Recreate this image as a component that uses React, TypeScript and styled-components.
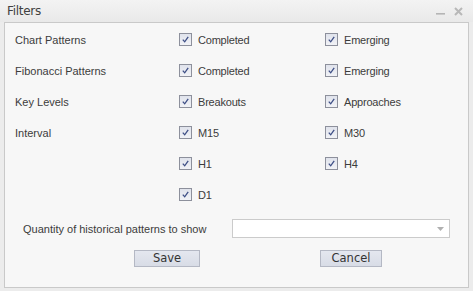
import React from "react";
import styled, { createGlobalStyle } from "styled-components";

const Global = createGlobalStyle`
  html, body { margin: 0; padding: 0; background: #ececec; }
  #root { width: 473px; height: 291px; }
`;

const Window = styled.div`
  width: 473px;
  height: 291px;
  box-sizing: border-box;
  background: #ececec;
  display: flex;
  flex-direction: column;
  font-family: "Liberation Sans", Tahoma, sans-serif;
  color: #3a3a3a;
`;

const TitleBar = styled.div`
  height: 22px;
  flex: none;
  display: flex;
  align-items: center;
  justify-content: space-between;
  padding: 0 10px 0 7px;
  box-sizing: border-box;
  background: linear-gradient(#f3f3f3, #e9e9e9);
`;

const Title = styled.span`
  color: #404040;
  font-family: "DejaVu Sans", sans-serif;
  letter-spacing: -0.3px;
  font-size: 12px;
`;

const TitleIcons = styled.div`
  display: flex;
  align-items: center;
  gap: 8px;
`;

const Content = styled.div`
  flex: 1;
  margin: 0 4px 3px 4px;
  border: 1px solid #c9c9c9;
  background: #f7f7f7;
  display: flex;
  flex-direction: column;
  padding: 1px 0 0 0;
`;

const Grid = styled.div`
  display: grid;
  grid-template-columns: 164px 146px 1fr;
  grid-auto-rows: 31px;
  padding-left: 10px;
  align-items: center;
`;

const Label = styled.div`
  font-size: 11px;
  color: #3c3c3c;
`;

const Check = styled.label`
  display: flex;
  align-items: center;
  gap: 6px;
  font-size: 11px;
  letter-spacing: -0.2px;
  color: #3c3c3c;
`;

const Box = styled.span`
  width: 11px;
  height: 11px;
  border: 1px solid #8d909c;
  background: linear-gradient(#e0e3ec, #f1f2f6);
  display: flex;
  align-items: center;
  justify-content: center;
  flex: none;
`;

const QtyRow = styled.div`
  display: flex;
  align-items: center;
  margin-top: 9px;
  padding-left: 18px;
`;

const QtyLabel = styled.div`
  font-size: 11px;
  color: #3c3c3c;
  width: 209px;
`;

const Select = styled.div`
  width: 218px;
  height: 19px;
  box-sizing: border-box;
  border: 1px solid #cbcbcb;
  background: #ffffff;
  display: flex;
  align-items: center;
  justify-content: flex-end;
  padding-right: 5px;
`;

const Buttons = styled.div`
  display: flex;
  padding-left: 129px;
  gap: 120px;
  margin-top: 12px;
`;

const Button = styled.button<{ $w: number }>`
  width: ${(p) => p.$w}px;
  height: 17px;
  padding: 0;
  border: 1px solid #b4b8c4;
  background: linear-gradient(#e4e7ef, #d8dce6);
  font-family: "DejaVu Sans", sans-serif;
  font-size: 11.5px;
  color: #333;
  line-height: 15px;
`;

const CheckIcon = () => (
  <svg width="9" height="9" viewBox="0 0 9 9">
    <path d="M1.8 4.6 L3.7 6.8 L7.2 1.8" fill="none" stroke="#3e4f86" strokeWidth="1.3" />
  </svg>
);

const Cb = ({ text }: { text: string }) => (
  <Check>
    <Box>
      <CheckIcon />
    </Box>
    {text}
  </Check>
);

const rows: [string, string, string | null][] = [
  ["Chart Patterns", "Completed", "Emerging"],
  ["Fibonacci Patterns", "Completed", "Emerging"],
  ["Key Levels", "Breakouts", "Approaches"],
  ["Interval", "M15", "M30"],
  ["", "H1", "H4"],
  ["", "D1", null],
];

export default function App() {
  return (
    <>
      <Global />
      <Window>
        <TitleBar>
          <Title>Filters</Title>
          <TitleIcons>
            <svg width="10" height="10" viewBox="0 0 10 10">
              <rect x="0" y="7" width="9" height="1.6" fill="#b5b5b5" />
            </svg>
            <svg width="9" height="9" viewBox="0 0 9 9">
              <path d="M1 1 L8 8 M8 1 L1 8" stroke="#b8b8b8" strokeWidth="2" />
            </svg>
          </TitleIcons>
        </TitleBar>
        <Content>
          <Grid>
            {rows.map(([l, a, b], i) => (
              <React.Fragment key={i}>
                <Label>{l}</Label>
                <Cb text={a} />
                {b ? <Cb text={b} /> : <span />}
              </React.Fragment>
            ))}
          </Grid>
          <QtyRow>
            <QtyLabel>Quantity of historical patterns to show</QtyLabel>
            <Select>
              <svg width="7" height="4" viewBox="0 0 7 4">
                <path d="M0 0 L7 0 L3.5 4 Z" fill="#b0b0b0" />
              </svg>
            </Select>
          </QtyRow>
          <Buttons>
            <Button $w={66}>Save</Button>
            <Button $w={62}>Cancel</Button>
          </Buttons>
        </Content>
      </Window>
    </>
  );
}
